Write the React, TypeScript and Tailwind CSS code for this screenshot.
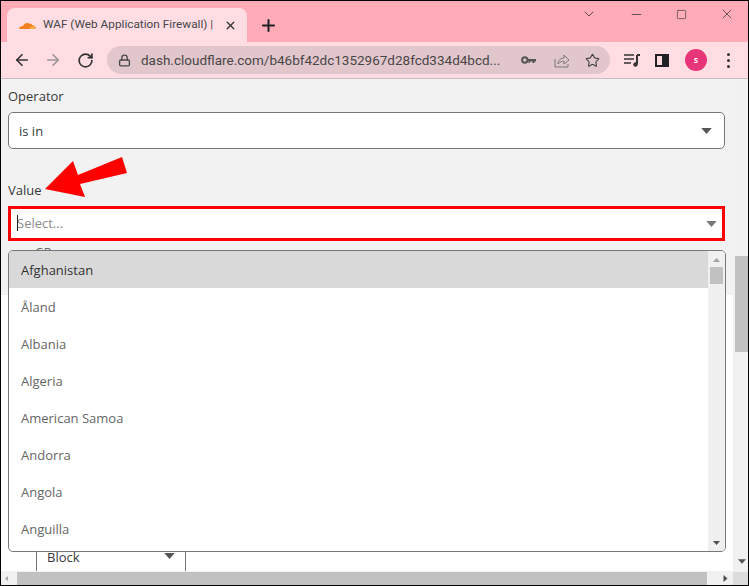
import { ArrowLeft, ArrowRight, RotateCw, Lock, Star, Plus, X, ChevronDown, Minus, Square } from 'lucide-react'

const COUNTRIES = ['Åland', 'Albania', 'Algeria', 'American Samoa', 'Andorra', 'Angola', 'Anguilla']

function Triangle({ className }: { className: string }) {
  return (
    <svg className={className} width="14" height="8" viewBox="0 0 14 8">
      <path d="M0 0h14L7 8z" fill="currentColor" />
    </svg>
  )
}

export default function App() {
  return (
    <div className="relative flex h-[586px] w-[749px] flex-col overflow-hidden border border-black bg-[#f2f2f2] font-['Open_Sans',sans-serif] text-[#36393a]">
      {/* Barre d'onglets */}
      <div className="flex h-[41px] shrink-0 items-end bg-[#ffabb8] pl-[6px]">
        <div className="flex h-[34px] w-[240px] items-center rounded-t-lg bg-[#ffdde3] pl-[12px] pr-[10px]">
          <svg width="17" height="8" viewBox="0 0 17 8" className="shrink-0">
            <path d="M0 8c0-2 2-3 4-3 1-3 5-4 7-2 1-.5 2 0 2 1 2 0 4 2 4 4z" fill="#f48120" />
            <path d="M10 8c1-2 3-3 4-3 1 0 3 1 3 3z" fill="#fbad41" />
          </svg>
          <span className="ml-[7px] flex-1 whitespace-nowrap font-['Roboto',sans-serif] text-[11.8px] leading-none text-[#45474a]">WAF (Web Application Firewall) |</span>
          <X size={13} strokeWidth={2.5} className="shrink-0 text-[#3a3a3a]" />
        </div>
        <Plus size={19} strokeWidth={2.5} className="mb-[7px] ml-[12px] text-[#202124]" />
        <div className="ml-auto mb-[20px] flex items-center gap-[32px] pr-[13px] text-[#333]">
          <ChevronDown size={16} strokeWidth={1.2} />
          <Minus size={15} strokeWidth={1.2} />
          <Square size={11} strokeWidth={1.4} />
          <X size={16} strokeWidth={1.1} />
        </div>
      </div>

      {/* Barre d'adresse */}
      <div className="flex h-[37px] shrink-0 items-center border-b border-[#c9bcc0] bg-[#ffdde3] pl-[12px]">
        <ArrowLeft size={18} strokeWidth={2.2} className="text-[#333]" />
        <ArrowRight size={18} strokeWidth={2.2} className="ml-[13px] text-[#9b9496]" />
        <RotateCw size={17} strokeWidth={2.4} className="ml-[15px] text-[#333]" />
        <div className="ml-[13px] flex h-[28px] w-[503px] items-center rounded-full bg-[#e1c6cc] pl-[11px] pr-[10px]">
          <Lock size={13} strokeWidth={2.5} className="shrink-0 text-[#4a4a4a]" />
          <span className="ml-[10px] flex-1 whitespace-nowrap font-['Roboto',sans-serif] text-[13.5px] text-[#4a4648]">
            dash.cloudflare.com/b46bf42dc1352967d28fcd334d4bcd...
          </span>
          <svg width="15" height="8" viewBox="0 0 15 8" className="shrink-0">
            <circle cx="3.8" cy="4" r="2.7" fill="none" stroke="#555" strokeWidth="2" />
            <path d="M6 3h9v2.5h-1.5V7h-2V5.500H9V7H7.500V5H6z" fill="#555" />
          </svg>
          <svg width="16" height="16" viewBox="0 0 16 16" className="ml-[18px] shrink-0" fill="none" stroke="#777" strokeWidth="1">
            <path d="M1 7v8h13v-3" />
            <path d="M4 12c0-4 3-6 6-6V3l5 5-5 4V9c-2 0-4 1-6 3z" />
          </svg>
          <Star size={15} strokeWidth={1.8} className="ml-[15px] shrink-0 text-[#444]" />
        </div>
        <svg width="16" height="13" viewBox="0 0 16 13" className="ml-[14px] shrink-0">
          <path d="M0 1h10M0 5h10M0 9h7" stroke="#333" strokeWidth="1.5" />
          <path d="M13 1v9" stroke="#333" strokeWidth="2" />
          <circle cx="11.5" cy="10.5" r="2.2" fill="#333" />
          <path d="M13 1h3" stroke="#333" strokeWidth="2" />
        </svg>
        <div className="ml-[15px] flex h-[13px] w-[14px] shrink-0 justify-end border-2 border-[#202124]">
          <div className="w-[5px] bg-[#202124]" />
        </div>
        <div className="ml-[16px] flex h-[22px] w-[22px] shrink-0 items-center justify-center rounded-full bg-[#e8357a] text-[9px] font-semibold text-white">
          s
        </div>
        <div className="ml-[20px] flex flex-col gap-[3px]">
          <span className="h-[3px] w-[3px] rounded-full bg-[#333]" />
          <span className="h-[3px] w-[3px] rounded-full bg-[#333]" />
          <span className="h-[3px] w-[3px] rounded-full bg-[#333]" />
        </div>
      </div>

      {/* Contenu de la page */}
      <div className="flex min-h-0 flex-1">
        <div className="relative flex flex-1 flex-col overflow-hidden">
          <div className="h-[216px] shrink-0 pl-[7px] pr-[8px] pt-[8px]">
            <div className="text-[13px] leading-[18px]">Operator</div>
            <div className="mt-[7px] flex h-[37px] items-center justify-between rounded-[5px] border border-[#777] bg-white pl-[10px] pr-[12px] text-[13px]">
              <span className="pt-[2px]">is in</span>
              <Triangle className="h-[6px] w-[11px] text-[#555]" />
            </div>
            <div className="mt-[32px] text-[13px] leading-[18px]">Value</div>
            <div className="mt-[7px] flex h-[35px] items-center justify-between border-[3px] border-[#ff0000] bg-white pl-[6px] pr-[5px] text-[13px] text-[#8a8a8a]">
              <span className="relative">
                <span className="absolute left-0 top-[1px] h-[16px] w-px bg-[#222]" />
                Select...
              </span>
              <Triangle className="h-[6px] w-[11px] text-[#777]" />
            </div>
            <div className="ml-[27px] mt-[5px] text-[12px] leading-[14px] text-[#666]">GB</div>
          </div>

          {/* Ligne "Block" masquée par la liste */}
          <div className="flex flex-1 flex-col justify-end bg-white">
            <div className="ml-[35px] flex h-[26px] w-[150px] items-start justify-between border-x border-[#777] pl-[10px] pr-[10px] text-[13px]">
              <span className="leading-[24px]">Block</span>
              <Triangle className="mt-[8px] h-[6px] w-[11px] text-[#555]" />
            </div>
            <div className="h-[1px] shrink-0 bg-[#f1f1f1]" />
          </div>

          {/* Flèche rouge d'annotation */}
          <svg className="absolute left-[43px] top-[77px]" width="84" height="42" viewBox="0 0 84 42">
            <path d="M1 33 L29 5 L34 19 L78 1 L83 17 L36 28 L41 41 Z" fill="#ff0000" />
          </svg>

          {/* Liste déroulante */}
          <div className="absolute left-[7px] top-[171px] flex h-[302px] w-[718px] overflow-hidden rounded-[5px] border border-[#777] bg-white text-[13px]">
            <div className="flex-1">
              <div className="flex h-[37px] items-center bg-[#d9d9d9] pl-[12px] pt-[2px] text-[#333]">Afghanistan</div>
              {COUNTRIES.map((c) => (
                <div key={c} className="flex h-[37px] items-center pl-[12px] pt-[2px] text-[#666]">{c}</div>
              ))}
            </div>
            <div className="flex w-[17px] flex-col items-center bg-[#f0f0f0] pt-[7px]">
              <Triangle className="h-[4px] w-[7px] rotate-180 text-[#a3a3a3]" />
              <div className="mt-[5px] h-[17px] w-[13px] bg-[#c1c1c1]" />
              <Triangle className="mt-auto mb-[6px] h-[4px] w-[7px] text-[#505050]" />
            </div>
          </div>
        </div>

        {/* Barre de défilement verticale */}
        <div className="flex w-[15px] shrink-0 flex-col items-center bg-[#f1f1f1] pl-[2px]">
          <div className="mt-[177px] h-[96px] w-full bg-[#c1c1c1]" />
          <Triangle className="mt-auto mb-[8px] h-[5px] w-[8px] text-[#505050]" />
        </div>
      </div>

      {/* Barre de défilement horizontale */}
      <div className="flex h-[13px] shrink-0 items-center bg-[#f1f1f1]">
        <Triangle className="ml-[3px] h-[7px] w-[5px] rotate-90 text-[#a3a3a3]" />
        <div className="ml-[8px] h-full w-[690px] bg-[#c1c1c1]" />
        <Triangle className="ml-[15px] h-[7px] w-[7px] -rotate-90 text-[#505050]" />
        <div className="ml-auto h-full w-[15px] bg-[#dcdcdc]" />
      </div>
    </div>
  )
}
